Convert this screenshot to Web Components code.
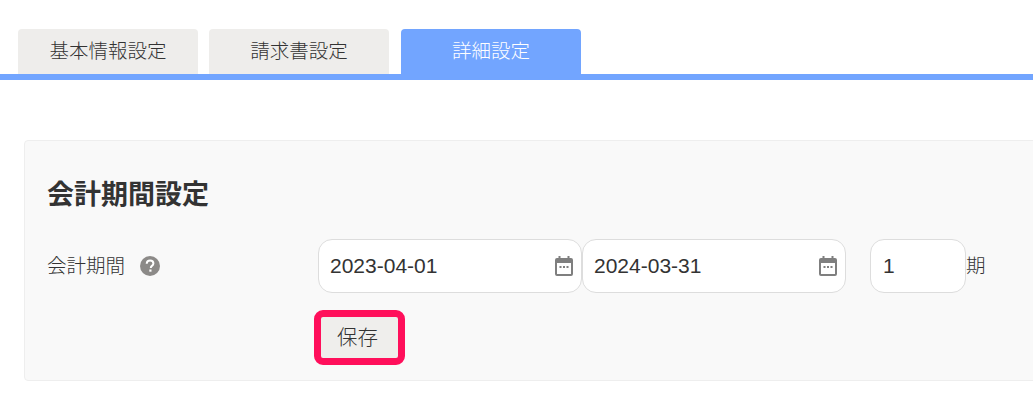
<!DOCTYPE html>
<html lang="ja">
<head>
<meta charset="utf-8">
<title>詳細設定</title>
<style>
  html, body { margin: 0; background: #fff; overflow: hidden; }
  body { font-family: "Liberation Sans", "Noto Sans CJK JP", sans-serif; color: #333; }
</style>
</head>
<body>
<settings-tabs>
  <settings-tab>基本情報設定</settings-tab>
  <settings-tab>請求書設定</settings-tab>
  <settings-tab active>詳細設定</settings-tab>
</settings-tabs>
<settings-panel heading="会計期間設定">
  <form-row label="会計期間">
    <date-field value="2023-04-01"></date-field>
    <date-field value="2024-03-31"></date-field>
    <period-field value="1" unit="期"></period-field>
  </form-row>
  <save-button>保存</save-button>
</settings-panel>

<script>
class SettingsTabs extends HTMLElement {
    constructor () {
        super();
        this.attachShadow({mode: 'open'});
        this.shadowRoot.innerHTML = `
          <style>
            :host { display: block; padding-top: 29px; }
            #head { display: flex; padding-left: 18px; border-bottom: 6px solid #72a5ff; }
            ::slotted(settings-tab:nth-child(2)) { margin-left: 11px; }
            ::slotted(settings-tab:nth-child(3)) { margin-left: 12px; }
          </style>
          <div id="head"><slot></slot></div>`;
    }
}
customElements.define('settings-tabs', SettingsTabs);

class SettingsTab extends HTMLElement {
    constructor () {
        super();
        this.attachShadow({mode: 'open'});
        this.shadowRoot.innerHTML = `
          <style>
            :host {
              display: block; width: 180px; height: 45px; line-height: 44px;
              text-align: center; font-size: 19.5px; font-weight: 300; color: #333; background: #eeedeb;
              border-radius: 4px 4px 0 0;
            }
            :host([active]) { background: #72a5ff; color: #fff; }
          </style>
          <slot></slot>`;
    }
}
customElements.define('settings-tab', SettingsTab);

class SettingsPanel extends HTMLElement {
    constructor () {
        super();
        this.attachShadow({mode: 'open'});
        this.shadowRoot.innerHTML = `
          <style>
            :host {
              display: block; box-sizing: border-box; height: 241px;
              margin: 60px -4px 0 24px; padding: 0 22px;
              background: #f9f9f9; border: 1px solid #eee; border-radius: 4px;
            }
            h2 { margin: 0; padding-top: 36px; height: 62px; line-height: 36px; font-size: 27px; font-weight: 700; color: #333; }
          </style>
          <h2></h2>
          <slot></slot>`;
        this.shadowRoot.querySelector('h2').textContent = this.getAttribute('heading');
    }
}
customElements.define('settings-panel', SettingsPanel);

class FormRow extends HTMLElement {
    constructor () {
        super();
        this.attachShadow({mode: 'open'});
        this.shadowRoot.innerHTML = `
          <style>
            :host { display: flex; align-items: center; height: 54px; }
            .label { display: flex; align-items: center; width: 271px; font-size: 19.5px; font-weight: 300; flex: none; color: #333; }
            .label span { margin-bottom: 4px; }
            svg { margin-left: 15px; flex: none; }
          </style>
          <div class="label"><span></span>
            <svg width="20" height="20" viewBox="0 0 20 20">
              <circle cx="10" cy="10" r="10" fill="#8c8a88"/>
              <path d="M6.700 7.800c.1-2 1.400-3.200 3.400-3.200s3.300 1.200 3.300 2.800c0 1.200-.7 1.900-1.500 2.500-.9.700-1.100 1.100-1.100 2.100" fill="none" stroke="#fff" stroke-width="2"/>
              <rect x="9.300" y="13.500" width="2.200" height="2.200" fill="#fff"/>
            </svg>
          </div>
          <slot></slot>`;
        this.shadowRoot.querySelector('span').textContent = this.getAttribute('label');
    }
}
customElements.define('form-row', FormRow);

class DateField extends HTMLElement {
    constructor () {
        super();
        this.attachShadow({mode: 'open'});
        this.shadowRoot.innerHTML = `
          <style>
            :host {
              display: flex; align-items: center; justify-content: space-between; flex: none;
              box-sizing: border-box; width: 264px; height: 54px; padding: 0 8px 0 11px;
              background: #fff; border: 1px solid #ddd; border-radius: 14px;
              font-size: 21px; color: #333;
            }
            svg { display: block; }
          </style>
          <span></span>
          <svg width="18" height="20" viewBox="0 0 18 20">
            <path fill="#7f7f7f" d="M3.500 0h2v2h7V0h2v2h1.500A2 2 0 0 1 18 4v14a2 2 0 0 1-2 2H2a2 2 0 0 1-2-2V4a2 2 0 0 1 2-2h1.500zM2 7v11h14V7z"/>
            <path fill="#7f7f7f" d="M4.500 10h2v2h-2zM8 10h2v2H8zM11.500 10h2v2h-2z"/>
          </svg>`;
        this.shadowRoot.querySelector('span').textContent = this.getAttribute('value');
    }
}
customElements.define('date-field', DateField);

class PeriodField extends HTMLElement {
    constructor () {
        super();
        this.attachShadow({mode: 'open'});
        this.shadowRoot.innerHTML = `
          <style>
            :host { display: flex; align-items: center; margin-left: 24px; font-size: 19.5px; font-weight: 300; color: #333; }
            span { margin-bottom: 3px; }
            .box {
              box-sizing: border-box; width: 96px; height: 54px; padding-left: 12px;
              line-height: 52px; font-size: 21px; font-weight: 400;
              background: #fff; border: 1px solid #ddd; border-radius: 14px;
            }
          </style>
          <div class="box"></div><span></span>`;
        this.shadowRoot.querySelector('.box').textContent = this.getAttribute('value');
        this.shadowRoot.querySelector('span').textContent = this.getAttribute('unit');
    }
}
customElements.define('period-field', PeriodField);

class SaveButton extends HTMLElement {
    constructor () {
        super();
        this.attachShadow({mode: 'open'});
        this.shadowRoot.innerHTML = `
          <style>
            :host {
              display: block; box-sizing: border-box; width: 91px; height: 55px;
              margin: 17px 0 0 267px; padding-right: 4px;
              border: 7px solid #ff0f5b; border-radius: 9px; background: #efeeec;
              text-align: center; line-height: 41px; font-size: 20.5px; font-weight: 300; color: #333;
            }
          </style>
          <slot></slot>`;
    }
}
customElements.define('save-button', SaveButton);
</script>
</body>
</html>
